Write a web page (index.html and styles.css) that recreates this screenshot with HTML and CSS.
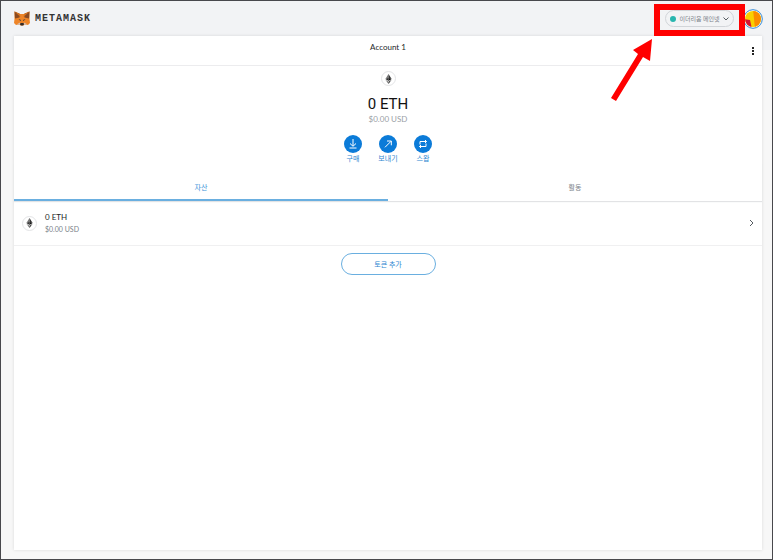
FILE: index.html
```html
<!DOCTYPE html>
<html lang="ko">
<head>
<meta charset="utf-8">
<meta name="viewport" content="width=device-width, initial-scale=1">
<title>MetaMask</title>
<link rel="stylesheet" href="styles.css">
</head>
<body>
<svg class="defs" aria-hidden="true">
  <symbol id="eth" viewBox="0 0 10 16">
    <path d="M5 0 0 8l5-2.200z" fill="#777"/>
    <path d="M5 0v5.800L10 8z" fill="#333"/>
    <path d="M0 8l5-2.200V11z" fill="#333"/>
    <path d="M10 8 5 5.800V11z" fill="#111"/>
    <path d="M0 9.300 5 12.300V16z" fill="#777"/>
    <path d="M10 9.300 5 12.300V16z" fill="#333"/>
  </symbol>
</svg>

<header class="topbar">
  <a class="brand" href="#">
    <svg class="fox" viewBox="0 0 32 30" aria-hidden="true">
      <path d="M1 1 12 6h8L31 1v15l1 8-4 4-7-1-2 2h-6l-2-2-7 1-4-4 1-8z" fill="#ee8427"/>
      <path d="M1 1 12 6l-1 7-9 2zM31 1 20 6l1 7 9 2z" fill="#8a4a22"/>
      <path d="M1 1 12 6l1 6zM31 1 20 6l-1 6z" fill="#d9741f"/>
      <path d="M9 16l5 2-1 2zM23 16l-5 2 1 2z" fill="#233447"/>
      <path d="M5 27l7-4 1 4zM27 27l-7-4-1 4z" fill="#d7c1b3"/>
      <path d="M13 24h6l1 3-2 2h-4l-2-2z" fill="#332c2a"/>
    </svg>
    <span class="wordmark">METAMASK</span>
  </a>
  <div class="tools">
    <button class="network" type="button">
      <span class="dot"></span>
      <span>이더리움 메인넷</span>
      <svg class="caret" viewBox="0 0 6 4" aria-hidden="true"><path d="M.5.500 3 3 5.500.500"/></svg>
    </button>
    <button class="avatar" type="button" aria-label="내 계정">
      <svg viewBox="0 0 20 20" aria-hidden="true">
        <defs><clipPath id="disc"><circle cx="10" cy="10" r="8"/></clipPath></defs>
        <circle cx="10" cy="10" r="9.300" fill="#fff" stroke="#2e86d6" stroke-width="1"/>
        <g clip-path="url(#disc)">
          <path d="M0 0h20v20H0z" fill="#f9d000"/>
          <path d="M10 0h10v20H12z" fill="#fb8c00"/>
          <path d="M0 10l7 1 2 9H0z" fill="#d4122f"/>
        </g>
      </svg>
    </button>
  </div>
  <div class="marker"></div>
  <svg class="arrow" viewBox="0 0 44 64" aria-hidden="true">
    <path d="M42 0 40 22 33 18 6 62 1 59 28 15 23 11z"/>
  </svg>
</header>

<main class="card">
  <div class="account">
    <button class="account-name" type="button">Account 1</button>
    <button class="more" type="button" aria-label="메뉴"><i></i><i></i><i></i></button>
  </div>

  <section class="overview">
    <span class="token"><svg><use href="#eth"/></svg></span>
    <h1 class="balance">0 ETH</h1>
    <p class="fiat">$0.00 USD</p>
    <div class="actions">
      <button class="action" type="button">
        <svg viewBox="0 0 18 18" aria-hidden="true"><circle cx="9" cy="9" r="9"/><path d="M9 4v7M6 8.500 9 11.300 12 8.500M5.500 13h7"/></svg>
        <span>구매</span>
      </button>
      <button class="action" type="button">
        <svg viewBox="0 0 18 18" aria-hidden="true"><circle cx="9" cy="9" r="9"/><path d="M6 12.300 12 6.300M8 6h4.300v4.300"/></svg>
        <span>보내기</span>
      </button>
      <button class="action" type="button">
        <svg viewBox="0 0 18 18" aria-hidden="true"><circle cx="9" cy="9" r="9"/><path d="M6 9.500V6.500h6.500M11 5l1.500 1.500L11 8M12 8.500v3H5.500M7 10l-1.500 1.500L7 13"/></svg>
        <span>스왑</span>
      </button>
    </div>
  </section>

  <nav class="tabs">
    <button class="tab active" type="button">자산</button>
    <button class="tab" type="button">활동</button>
  </nav>

  <a class="asset" href="#">
    <span class="token"><svg><use href="#eth"/></svg></span>
    <span class="amounts">
      <span class="amount">0 ETH</span>
      <span class="value">$0.00 USD</span>
    </span>
    <svg class="chevron" viewBox="0 0 5 8" aria-hidden="true"><path d="M1 1l3 3-3 3"/></svg>
  </a>

  <button class="add" type="button">토큰 추가</button>
</main>
</body>
</html>
```
FILE: styles.css
```css
* {
  box-sizing: border-box;
}

body {
  margin: 0;
  min-height: 100vh;
  display: flex;
  flex-direction: column;
  padding: 0 10px 9px 13px;
  border: 1px solid #48484c;
  background: linear-gradient(#f2f3f5 50px, #f7f7f7 50px);
  font-family: Lato, "Noto Sans CJK KR", sans-serif;
  font-size: 8px;
  line-height: 10px;
  color: #24272a;
}

button {
  padding: 0;
  border: 0;
  background: none;
  font: inherit;
  color: inherit;
}

a {
  color: inherit;
  text-decoration: none;
}

.defs {
  position: absolute;
  width: 0;
  height: 0;
}

.topbar {
  position: relative;
  display: flex;
  align-items: center;
  justify-content: space-between;
  height: 35px;
}

.brand {
  display: flex;
  align-items: center;
  gap: 5px;
}

.fox {
  width: 16px;
  height: 15px;
}

.wordmark {
  font: bold 10px/14px "Liberation Mono", monospace;
  letter-spacing: 1px;
  color: #333;
}

.tools {
  display: flex;
  align-items: center;
  gap: 9px;
}

.network {
  display: flex;
  align-items: center;
  justify-content: space-between;
  width: 69px;
  height: 17px;
  padding: 0 4px;
  border: 1px solid #d2d5d9;
  border-radius: 9px;
  font-size: 6px;
  color: #7b8289;
}

.dot {
  width: 6px;
  height: 6px;
  border-radius: 50%;
  background: #29b6af;
}

.caret {
  width: 6px;
  height: 4px;
}

.caret path,
.chevron path {
  fill: none;
  stroke: #555b61;
  stroke-width: 1;
}

.avatar,
.avatar svg {
  display: block;
  width: 20px;
  height: 20px;
}

.avatar {
  margin-right: -1px;
}

.marker {
  position: absolute;
  top: 3px;
  right: 17px;
  width: 91px;
  height: 32px;
  border: 6px solid #f00;
}

.arrow {
  position: absolute;
  top: 38px;
  right: 108px;
  width: 44px;
  height: 64px;
  fill: #f00;
}

.card {
  flex: 1;
  background: #fff;
  box-shadow: 0 0 3px rgba(0, 0, 0, 0.12);
}

.account {
  display: grid;
  grid-template-columns: 1fr auto 1fr;
  height: 30px;
  border-bottom: 1px solid #ececee;
}

.account-name {
  grid-column: 2;
  align-self: start;
  padding-top: 6px;
}

.more {
  justify-self: end;
  align-self: center;
  display: grid;
  gap: 1px;
  padding: 0 8px;
}

.more i {
  width: 2px;
  height: 2px;
  background: #222;
}

.overview {
  display: flex;
  flex-direction: column;
  align-items: center;
  padding-top: 5px;
}

.token {
  display: grid;
  place-items: center;
  width: 15px;
  height: 15px;
  border: 1px solid #e3e4e6;
  border-radius: 50%;
}

.token svg {
  width: 7px;
  height: 10px;
}

.balance {
  margin: 8px 0 0;
  font: 400 15px/20px Roboto, sans-serif;
  color: #111;
}

.fiat {
  margin: 0;
  color: #9aa0a6;
}

.actions {
  display: flex;
  margin-top: 11px;
}

.action {
  display: flex;
  flex-direction: column;
  align-items: center;
  width: 35px;
  font-size: 7px;
  color: #2e86d0;
}

.action svg {
  width: 18px;
  height: 18px;
}

.action circle {
  fill: #0b7bd8;
}

.action path {
  fill: none;
  stroke: #fff;
  stroke-width: 1;
}

.tabs {
  display: flex;
  height: 38px;
  box-shadow: 0 1px 1px #e2e3e5;
}

.tab {
  flex: 1;
  padding-top: 12px;
  border-bottom: 2px solid transparent;
  font-size: 7px;
  color: #7b8289;
}

.active {
  border-color: #6aafe0;
  color: #3a92d8;
}

.asset {
  display: flex;
  align-items: center;
  gap: 8px;
  height: 45px;
  padding: 0 8px;
  border-bottom: 1px solid #f0f0f1;
}

.amounts {
  flex: 1;
  display: grid;
  gap: 2px;
}

.value {
  font-size: 7px;
  color: #7b8289;
}

.chevron {
  width: 5px;
  height: 8px;
}

.add {
  display: block;
  width: 95px;
  height: 22px;
  margin: 7px auto;
  border: 1px solid #6aafe0;
  border-radius: 11px;
  font-size: 7px;
  color: #2e86d0;
}
```
